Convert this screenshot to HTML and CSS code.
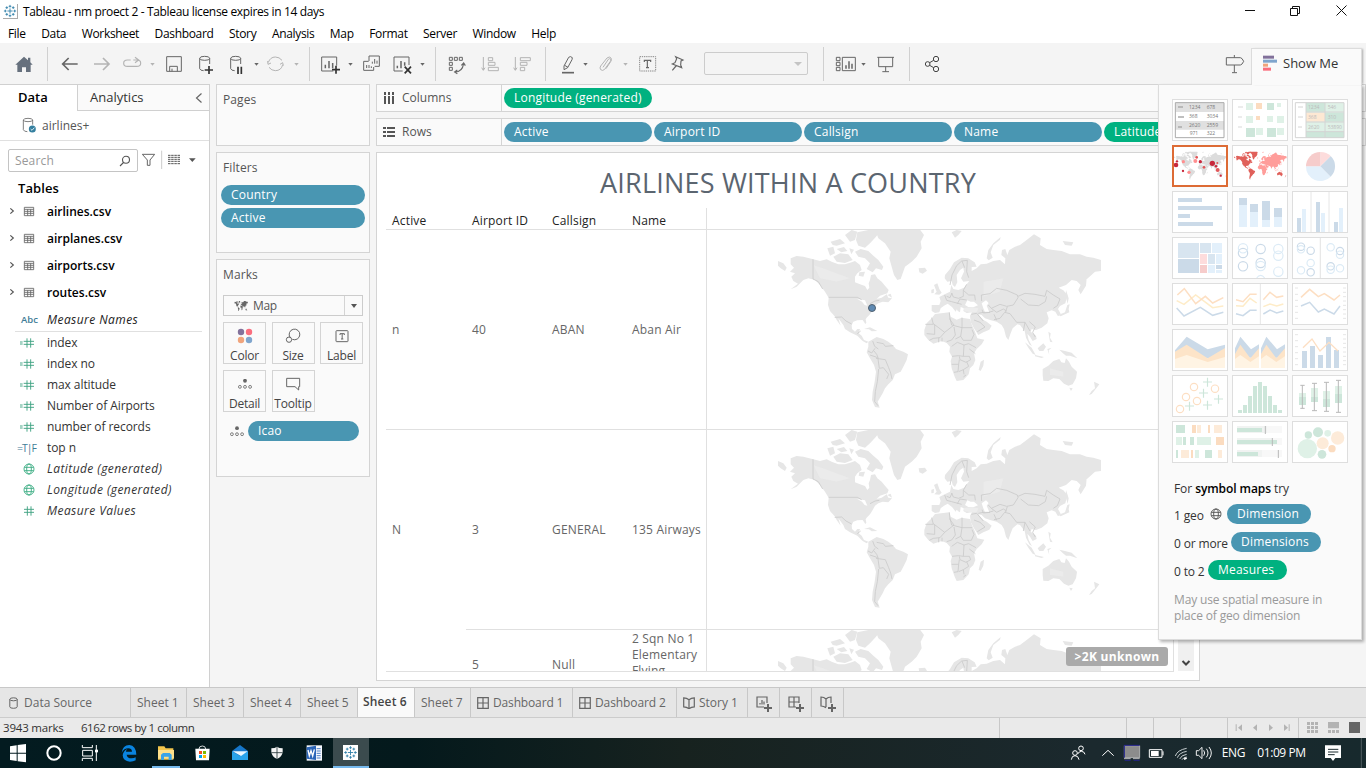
FILE: index.html
```html
<!DOCTYPE html>
<html lang="en">
<head>
<meta charset="utf-8">
<title>Tableau - nm proect 2</title>
<link rel="stylesheet" href="styles.css">
</head>
<body>
<svg class="defs" width="0" height="0">
<defs>
<g id="americas">
<path d="M62 100L80 93L100 95L130 103L150 108L170 103L185 110L205 118L225 118L245 112L255 108L270 120L275 135L262 145L255 155L255 172L270 178L285 183L292 195L298 188L296 175L300 165L303 150L315 148L322 160L335 170L345 182L356 195L352 205L330 212L320 222L335 218L350 208L355 218L366 220L355 232L338 230L325 235L315 242L308 255L300 268L290 278L287 283L289 293L286 297L278 285L262 286L250 290L245 300L246 312L255 320L262 312L270 312L266 325L275 332L282 345L295 350L290 355L278 348L262 332L240 322L225 312L220 300L205 280L212 302L200 285L194 274L180 258L174 240L176 218L165 200L150 180L135 165L115 160L100 165L80 185L62 193L84 176L70 168L64 155L75 145L60 140L72 128L62 118Z"/>
<path d="M24 108L40 115L50 128L45 138L32 130L24 122ZM172 70L190 65L195 85L180 92ZM190 95L210 85L235 88L248 105L225 114L200 110ZM182 50L210 42L225 55L200 62L188 60ZM225 30L245 15L262 20L255 45L240 50ZM262 22L300 14L335 14L318 35L300 55L285 68L265 62L258 45ZM200 72L222 66L232 78L214 82ZM238 70L252 74L244 88ZM272 72L295 78L310 92L325 105L340 125L336 135L318 130L308 142L290 132L300 115L285 100L265 95L255 80ZM268 142L285 140L280 155L266 152ZM352 210L362 206L366 218ZM282 312L300 307L322 318L305 319L297 313Z"/>
<path d="M315 14L450 14L462 30L452 50L455 70L440 95L425 110L405 125L392 162L382 165L372 150L365 125L358 100L362 80L345 55L325 40Z"/>
<path d="M295 350L310 342L320 336L340 342L355 350L370 362L378 372L400 380L414 388L410 405L400 425L392 440L375 448L368 465L355 478L345 490L338 505L330 518L323 530L329 548L315 546L306 525L308 500L314 470L318 440L312 420L300 400L290 382L295 365Z"/>
</g>
<g id="eurasia">
<path d="M485 240L508 240L512 228L508 216L524 208L540 200L544 180L550 192L565 195L582 188L590 178L598 168L580 170L573 160L582 140L580 128L570 135L560 150L562 172L555 186L548 180L545 168L532 170L524 160L525 150L540 132L552 112L575 98L595 100L614 112L620 125L605 126L605 138L620 130L632 118L650 116L670 108L690 105L705 118L706 100L694 90L696 75L706 72L712 90L718 75L735 65L750 60L770 45L792 28L812 40L810 60L830 72L850 75L875 78L900 88L930 88L950 95L970 98L993 105L993 138L975 140L962 152L950 163L930 168L950 160L948 182L932 208L925 195L932 180L920 168L905 165L888 180L866 188L880 196L892 210L886 235L870 243L864 252L872 266L864 274L856 260L845 256L830 262L836 280L832 295L815 308L798 315L785 312L782 320L798 332L800 342L788 348L780 335L772 326L776 345L786 364L778 358L768 338L764 318L750 300L742 298L728 310L722 325L715 345L708 335L702 312L695 300L680 290L660 285L645 280L635 270L625 268L640 285L650 290L665 302L658 314L640 322L625 330L612 310L602 290L600 272L606 262L590 264L580 258L582 250L572 246L570 262L563 258L558 246L543 232L562 250L557 260L546 246L533 236L522 242L512 250L508 262L495 264L485 258Z"/>
<path d="M495 267L520 264L538 262L542 275L560 284L575 278L600 282L605 298L615 320L622 340L643 344L635 358L620 372L612 385L616 405L610 420L600 430L596 448L580 465L560 468L554 455L545 430L542 408L546 395L538 380L540 365L530 354L515 348L490 356L475 345L463 330L463 315L470 295L485 280Z"/>
<path d="M632 410L642 404L640 422L632 438L626 434ZM493 208L500 200L492 180L502 175L508 192L515 203L508 209ZM484 194L492 192L491 204L484 205ZM446 130L465 128L471 137L458 146L448 142ZM650 100L655 75L670 55L692 36L690 44L670 60L662 82L668 98L656 106ZM545 22L560 15L575 18L565 30L555 38ZM878 48L910 52L905 62L885 60ZM892 240L899 238L896 252L898 262L885 268L872 274L865 270L885 262ZM888 195L896 220L893 236L887 215ZM765 352L785 368L797 390L788 386L775 368ZM795 390L822 396L815 399L795 394ZM803 370L820 355L828 365L820 378L808 378ZM832 372L845 368L836 376L838 390ZM868 374L885 378L905 383L922 400L900 392L888 392L878 384ZM835 320L842 325L840 338L848 352L840 350Z"/>
</g>
<g id="oceania"><path d="M818 432L835 422L850 408L868 402L874 412L884 414L888 400L897 410L905 425L921 440L918 460L908 478L895 482L882 476L868 462L850 460L835 468L820 467L818 450ZM898 488L908 490L903 498ZM972 470L988 478L980 488L965 507L957 510L965 498L975 490Z"/></g>
<g id="borders">
<path d="M129 103V162L145 170L158 192M176 217H262L275 224M300 236L315 228L328 226M194 277L215 276L228 288L245 297M262 326L272 318"/>
<path d="M308 348L314 364L325 372M320 352L340 356L346 364L370 362M294 378L305 384L315 370M300 390L318 396L325 400L320 388L312 378M318 400L346 404L356 428L362 444L366 462M324 402L328 430L340 428L356 448L350 462M326 432L322 470L316 500L314 530L324 542"/>
<path d="M540 180L546 150L560 122L575 108L592 106L590 140L596 158M576 108L584 128M590 178L580 196L596 210L614 210L616 226M524 210L530 226L545 230L575 238M545 204L550 216L566 220L580 214L580 196M562 236L570 222L590 225M546 204L540 218L530 214"/>
<path d="M635 228L634 210L660 206L680 190L710 196L742 210L744 218L730 240L710 244L690 238L664 250L655 240M744 214L765 205L795 208L825 214L830 196L850 210L870 222L862 242L850 250M752 222L775 240L806 242L826 230L830 214M664 250L680 262L700 252L710 258M625 265L640 262L656 262L670 258M672 284L690 280L704 262L720 266L740 292L765 292L780 318M712 245L706 262M680 286L672 268M765 292L760 318M778 290L796 306L788 322L796 336M604 268L620 265L640 288M612 285L630 292L645 306L622 320M636 254L640 264L660 262"/>
<path d="M485 278L490 298L466 298M490 296L524 322L552 300L540 284L538 262M494 300V328L470 326M524 322L510 338L490 340L478 346M540 280L545 300L576 308V278M576 308H606M552 306L556 330L545 345L530 350M576 308L572 334L556 342M572 334L580 346L604 346L612 328L606 314M545 364L562 352L582 360L596 356L618 368M582 360L580 394L566 392L546 394M598 372L616 386M580 394L598 394L602 404L588 412L570 404L568 394M568 404L566 418L545 418M566 418L564 440L552 442M566 440L580 434L596 424L590 410M580 434L582 448M506 338V352M516 338V350M580 456L588 450"/>
</g>
<g id="world"><use href="#americas"/><use href="#eurasia"/><use href="#oceania"/></g>
<symbol id="basemap" viewBox="0 0 1020 570">
<use href="#world" fill="#e6e6e6"/>
<path fill="#fff" d="M585 240L592 226L602 230L612 230L624 241L610 247L595 246ZM635 235L648 226L656 234L650 242L658 262L646 264L640 250ZM262 222L285 226L292 242L284 240L276 230ZM546 260L560 264L580 266L600 268V276L575 272L560 280L545 272Z"/>
<path fill="#ededed" d="M580 249L605 247L625 250L620 262L600 261L584 259Z"/>
<path fill="#f0f0f0" opacity=".5" d="M640 170L700 160L690 200L640 215ZM130 120L160 130L240 160L200 170L150 160ZM840 430L880 440L880 455L840 450Z"/>
<use href="#borders" fill="none" stroke="#c9c9c9" stroke-width="2.4"/>
</symbol>
<symbol id="tablerow" viewBox="0 345 141 81"><path d="M31 376l9 8-9 8" fill="none" stroke="#555" stroke-width="3.5"/><path d="M73 373h28v25h-28zM73 379h28M73 385h28M73 391h28M83 379v19M92 379v19" fill="none" stroke="#666" stroke-width="2.6"/></symbol>
<symbol id="calc" viewBox="0 96 141 63"><path d="M60 126h8M60 132h8M71 124h31M71 133h31M81 115v28M92 115v28" fill="none" stroke="#3fa382" stroke-width="2.8"/></symbol>
<symbol id="hash" viewBox="0 96 141 63"><path d="M72 124h30M72 133h30M82 115v28M93 115v28" fill="none" stroke="#3fa382" stroke-width="2.8"/></symbol>
<symbol id="globe" viewBox="0 0 36 36"><g fill="none" stroke="currentColor" stroke-width="2.8"><circle cx="18" cy="18" r="15"/><ellipse cx="18" cy="18" rx="7" ry="15"/><path d="M4 13h28M4 23h28"/></g></symbol>
<symbol id="detail" viewBox="0 0 44 33"><circle cx="22" cy="6" r="6" fill="#666"/><g fill="none" stroke="#666" stroke-width="2.6"><circle cx="6" cy="25" r="4.5"/><circle cx="22" cy="25" r="4.5"/><circle cx="38" cy="25" r="4.5"/></g></symbol>
<symbol id="mark" viewBox="0 0 48 48"><g stroke="#2f7fa8" stroke-width="3" fill="none"><path d="M24 15v18M15 24h18M24 3v9M19.500 8h9M24 36v9M19.500 40h9M3 24h9M8 19.500v9M36 24h9M40 19.500v9M13 8v9M8.500 12.500h9M35 8v9M30.500 12.500h9M13 31v9M8.500 35.500h9M35 31v9M30.500 35.500h9"/></g></symbol>
</defs>
</svg>

<div class="app">
<header class="titlebar">
<span class="applogo"><svg width="14" height="14"><use href="#mark"/></svg></span>
<span class="apptitle">Tableau - nm proect 2 - Tableau license expires in 14 days</span>
<svg class="winctl" width="136" height="24" viewBox="0 0 136 24" fill="none" stroke="#111"><path d="M15 10.500h10M60.500 8.500h7v7h-7zM62.500 8v-1.500h7v7h-1.500M106.500 5.500l10 10M116.500 5.500l-10 10"/></svg>
</header>
<nav class="menubar"><span>File</span><span>Data</span><span>Worksheet</span><span>Dashboard</span><span>Story</span><span>Analysis</span><span>Map</span><span>Format</span><span>Server</span><span>Window</span><span>Help</span></nav>

<div class="toolbar">
<svg width="47" viewBox="0 156 141 72"><path fill="#66707d" d="M46 194l26-24 12 11v-8h7v14l7 7h-6v22h-14v-14h-12v14h-14v-22z"/></svg>
<i class="sep"></i>
<svg width="38" viewBox="144 156 114 72" class="ln b"><path d="M233 192h-44M206 174l-18 18 18 18"/></svg>
<svg width="30" viewBox="258 156 90 72" class="ln b off"><path d="M282 192h44M309 174l18 18-18 18"/></svg>
<svg width="44" viewBox="348 156 132 72" class="ln off"><path d="M392 180h-10q-11 0-11 9.500t11 9.500h28q12 0 12-9.500 0-9.500-10-9.500h-12M405 172l11 8-11 8" stroke-width="3.500"/><path class="car" d="M451 189h13l-6.500 8z"/></svg>
<svg width="30" viewBox="480 156 90 72" class="ln"><path d="M500 170h44v44h-44zM509 214v-15h23v15M516 214v-8"/></svg>
<svg width="32" viewBox="570 156 96 72" class="ln"><ellipse cx="614" cy="175" rx="15" ry="6"/><path d="M599 175v31q2 6 12 6M629 175v17"/><path d="M614 210h25M627 198v24" stroke="#333" stroke-width="5"/></svg>
<svg width="41" viewBox="666 156 123 72" class="ln"><ellipse cx="707" cy="175" rx="15" ry="6"/><path d="M692 175v31q2 6 12 6M722 175v17"/><path d="M714 200v22M724 200v22" stroke="#333" stroke-width="5"/><path class="car" d="M763 189h13l-6.500 8z"/></svg>
<svg width="46" viewBox="789 156 138 72" class="ln off"><path d="M805 187q6-16 21-16 12 0 20 10M848 194q-4 18-22 18-11 0-19-10M803 183l1 10 9-4M850 197l-2-9-8 5"/><path class="car" d="M883 189h13l-6.500 8z"/></svg>
<i class="sep"></i>
<svg width="48" viewBox="930 156 144 72" class="ln"><path d="M1000 213h-35v-42h45v26"/><path d="M976 205v-11M987 205v-22M998 205v-16" stroke-width="4.500"/><path d="M996 209h24M1008 197v24" stroke="#333" stroke-width="5"/><path class="car" d="M1045 189h13l-6.500 8z"/></svg>
<svg width="28" viewBox="1074 156 84 72" class="ln"><path d="M1107 168h31v31h-14M1107 168v15M1091 184h15M1091 184v27h30v-10M1117 191v-6M1124 191v-14M1131 191v-9M1100 204v-9M1107 204v-9M1114 204v-5"/></svg>
<svg width="49" viewBox="1158 156 147 72" class="ln"><path d="M1208 213h-26v-42h45v24"/><path d="M1192 205v-8M1203 205v-22M1214 197v-10" stroke-width="4.500"/><path d="M1214 200l19 20M1233 200l-19 20" stroke="#333" stroke-width="5"/><path class="car" d="M1261 189h13l-6.500 8z"/></svg>
<i class="sep"></i>
<svg width="37" viewBox="-12 36 111 72" class="ln"><path d="M28 52h9v9h-9zM43 52h9v9h-9zM58 52h9v9h-9zM28 67h9v9h-9zM28 82h9v9h-9z"/><path d="M45 96q22 0 26-26M64 76l7-7 5 8M52 90l-8 6 8 5" stroke-width="3.500"/></svg>
<svg width="33" viewBox="99 36 99 72" class="ln off"><path d="M130 51v39M125 83l5 8 5-8M145 53h13v9h-13zM145 67h20v9h-20zM145 82h30v10h-30z"/></svg>
<svg width="39" viewBox="198 36 117 72" class="ln off"><path d="M226 51v39M221 83l5 8 5-8M241 53h30v9h-30zM241 67h20v9h-20zM241 82h13v10h-13z"/></svg>
<i class="sep"></i>
<svg width="47" viewBox="318 36 141 72" class="ln"><path d="M372 78l14-26q5-5 11 1l-1 6-13 24-11 6zM374 76l10 6"/><path d="M366 98h36" stroke-width="5"/><path class="car" d="M430 69h13l-6.500 8z"/></svg>
<svg width="40" viewBox="459 36 120 72" class="ln off"><path d="M489 82l16-24q4-4 7 0 1 3-1 6l-17 24q-6 6-12 1-4-5 0-11l19-24q8-6 12 0 3 5-1 11l-14 21"/><path class="car" d="M550 69h13l-6.500 8z"/></svg>
<svg width="30" viewBox="579 36 90 72" class="ln"><path d="M599 50h48v43h-48z" stroke-dasharray="4 2.500" stroke="#888"/><path d="M613 66v-5h19v5M622 61v22M618 83h9" stroke-width="3.500"/></svg>
<svg width="41" viewBox="669 36 123 72" class="ln"><path d="M707 50l22 10-6 3-1 12 3 8-28-11 8-4 5-12zM708 78l-11 13" stroke-width="3.500"/></svg>
<div class="fit"></div>
<i class="sep"></i>
<svg width="48" viewBox="1152 36 144 72" class="ln"><path d="M1189 52h11v10h-11zM1189 67h11v10h-11zM1189 82h11v10h-11zM1207 52h39v40h-39z"/><path d="M1218 86v-10M1227 86v-22M1236 86v-15" stroke-width="4.500"/><path class="car" d="M1264 69h13l-6.500 8z"/></svg>
<svg width="37" viewBox="1296 36 111 72" class="ln"><path d="M1312 52h50M1316 52v28h42v-28M1337 80v15M1327 95h20"/></svg>
<i class="sep"></i>
<svg width="40" viewBox="1410 36 120 72" class="ln"><g stroke="#444"><circle cx="1463" cy="72" r="7"/><circle cx="1488" cy="57" r="8"/><circle cx="1488" cy="87" r="8"/><path d="M1469 68l12-7M1469 76l12 7"/></g></svg>
<svg class="guide ln" width="35" viewBox="180 36 105 72"><path d="M211 53h42q5 0 10 11-5 11-10 11h-42zM235 45v8M235 75v22M228 98h15"/></svg>
</div>

<main class="work">
<aside class="data">
<div class="dtabs"><b>Data</b><span>Analytics<svg width="8" height="10" viewBox="0 0 8 10"><path d="M6.500 .5L1.500 5l5 4.500" fill="none" stroke="#666" stroke-width="1.200"/></svg></span></div>
<div class="source"><svg width="42" height="29" viewBox="0 81 126 87"><g fill="none" stroke="#666" stroke-width="2.500"><ellipse cx="84" cy="108" rx="14" ry="5"/><path d="M70 108v29q2 6 12 6M98 108v14"/></g><circle cx="97" cy="135" r="10.500" fill="#347f9f"/><path d="M92 135l4 4 7-8" stroke="#fff" stroke-width="2.500" fill="none"/></svg><span>airlines+</span></div>
<div class="searchrow"><div class="search">Search<svg width="12" height="12" viewBox="0 0 12 12" fill="none" stroke="#555" stroke-width="1.100"><circle cx="7" cy="4.800" r="3.500"/><path d="M4.500 7.500L1 11"/></svg></div><svg width="71" height="23" viewBox="414 195 213 69"><path d="M427 211h37l-14 17v16h-8v-16z" fill="none" stroke="#666" stroke-width="3"/><path d="M485 200v55" stroke="#ccc" stroke-width="3"/><path d="M504 214h36M504 220h36M504 226h36M504 232h36M504 239h36" stroke="#555" stroke-width="3" stroke-dasharray="7.500 2"/><path d="M567 223h20l-10 11z" fill="#555"/></svg></div>
<h3>Tables</h3>
<ul class="tables"><li><svg><use href="#tablerow"/></svg>airlines.csv</li><li><svg><use href="#tablerow"/></svg>airplanes.csv</li><li><svg><use href="#tablerow"/></svg>airports.csv</li><li><svg><use href="#tablerow"/></svg>routes.csv</li></ul>
<div class="mnames"><span class="abc">Abc</span><em>Measure Names</em></div>
<ul class="fields">
<li><svg><use href="#calc"/></svg>index</li><li><svg><use href="#calc"/></svg>index no</li><li><svg><use href="#calc"/></svg>max altitude</li><li><svg><use href="#calc"/></svg>Number of Airports</li><li><svg><use href="#calc"/></svg>number of records</li>
<li><span class="tf">=T|F</span>top n</li>
<li><svg class="gl"><use href="#globe"/></svg><em>Latitude (generated)</em></li><li><svg class="gl"><use href="#globe"/></svg><em>Longitude (generated)</em></li><li><svg><use href="#hash"/></svg><em>Measure Values</em></li>
</ul>
</aside>

<section class="cards">
<div class="card pages"><h4>Pages</h4></div>
<div class="card filters"><h4>Filters</h4><div class="pill">Country</div><div class="pill">Active</div></div>
<div class="card marks"><h4>Marks</h4>
<div class="marktype"><svg width="14" height="10" viewBox="20 60 980 440" preserveAspectRatio="none" fill="#666"><use href="#world"/></svg><span>Map</span><i></i></div>
<div class="btns">
<div><svg width="16" height="16" viewBox="0 0 16 16"><circle cx="4" cy="4" r="3.200" fill="#82719b"/><circle cx="12" cy="4" r="3.200" fill="#fa6e7e"/><circle cx="4" cy="12" r="3.200" fill="#f0a47c"/><circle cx="12" cy="12" r="3.200" fill="#7fa5cd"/></svg>Color</div>
<div><svg width="16" height="16" viewBox="0 0 48 48" fill="none" stroke="#666" stroke-width="3"><path d="M15 28A16 16 0 1 1 22 34"/><circle cx="12" cy="35" r="8"/></svg>Size</div>
<div><svg width="16" height="16" viewBox="0 0 48 48" fill="none" stroke="#666" stroke-width="3"><rect x="6" y="8" width="36" height="33" rx="2"/><path d="M18 21v-4h13v4M24.500 17v16M21 33h7"/></svg>Label</div>
<div><svg width="14" height="16" viewBox="0 -8 44 48"><use href="#detail" width="44" height="33"/></svg>Detail</div>
<div><svg width="16" height="16" viewBox="0 0 48 48" fill="none" stroke="#666" stroke-width="3"><path d="M5 7h39v25h-3v10l-11-10h-25z"/></svg>Tooltip</div>
</div>
<div class="icao"><svg width="14" height="11"><use href="#detail"/></svg><div class="pill">Icao</div></div>
</div>
</section>

<section class="view">
<div class="shelf"><div class="name"><svg width="12" height="12" viewBox="0 0 12 12" stroke="#555" stroke-width="2"><path d="M2 0v3M6 0v3M10 0v3M2 4v8M6 4v8M10 4v8"/></svg>Columns</div><div class="pill green">Longitude (generated)</div></div>
<div class="shelf"><div class="name"><svg width="12" height="12" viewBox="0 0 12 12" stroke="#555" stroke-width="1.800"><path d="M0 2h3M0 6h3M0 10h3M4 2h8M4 6h8M4 10h8"/></svg>Rows</div><div class="pill">Active</div><div class="pill">Airport ID</div><div class="pill">Callsign</div><div class="pill">Name</div><div class="pill green">Latitude</div></div>
<div class="sheet">
<h1>AIRLINES WITHIN A COUNTRY</h1>
<div class="viz">
<div class="grid">
<div class="row head"><span>Active</span><span>Airport ID</span><span>Callsign</span><span>Name</span><div class="pane"></div></div>
<div class="row"><span>n</span><span>40</span><span>ABAN</span><span>Aban Air</span><div class="pane"><svg class="map" width="340" height="190"><use href="#basemap"/></svg><i class="dot"></i></div></div>
<div class="row"><span>N</span><span>3</span><span>GENERAL</span><span>135 Airways</span><div class="pane"><svg class="map" width="340" height="190"><use href="#basemap"/></svg></div></div>
<div class="row last"><span></span><span>5</span><span>Null</span><span class="multi">2 Sqn No 1<br>Elementary<br>Flying</span><div class="pane"><svg class="map" width="340" height="190"><use href="#basemap"/></svg><b class="unknown">&gt;2K unknown</b></div></div>
</div>
<div class="scroll"><svg width="10" height="7" viewBox="0 0 10 7"><path d="M1.500 1L5 4.500 8.500 1" fill="none" stroke="#444" stroke-width="2"/></svg></div>
</div>
</div>
</section>
</main>

<div class="tabs">
<div class="ds"><svg width="9" height="12" viewBox="0 0 9 12" fill="none" stroke="#666"><ellipse cx="4.500" cy="2.300" rx="3.700" ry="1.500"/><path d="M.8 2.300v7.500q0 1.500 3.700 1.500t3.700-1.500V2.300"/></svg>Data Source</div>
<div class="s1">Sheet 1</div><div>Sheet 3</div><div>Sheet 4</div><div>Sheet 5</div><div class="on">Sheet 6</div><div class="s7">Sheet 7</div>
<div class="d1"><svg width="12" height="12" viewBox="0 0 12 12" class="tl"><path d="M.7.7h10.600v10.600H.7zM.7 6h10.600M6 .7v10.600"/></svg>Dashboard 1</div>
<div class="d2"><svg width="12" height="12" viewBox="0 0 12 12" class="tl"><path d="M.7.7h10.600v10.600H.7zM.7 6h10.600M6 .7v10.600"/></svg>Dashboard 2</div>
<div class="st"><svg width="12" height="12" viewBox="0 0 12 12" class="tl"><path d="M.7.8q3 0 5.300 2Q8.300.8 11.300.8v9q-3 0-5.300 2-2.300-2-5.300-2zM6 2.800v8.800"/></svg>Story 1</div>
<div class="add"><svg width="17" height="16" viewBox="0 0 17 16" class="tl"><path d="M8 11H1V1h10v6M4 8.500V7M6 8.500V4M8 8.500V5.500"/><path d="M8 12h8M12 8v8" stroke-width="2"/></svg></div>
<div class="add"><svg width="17" height="16" viewBox="0 0 17 16" class="tl"><path d="M8 11H1V1h10v6M1 6h10M6 1v10"/><path d="M8 12h8M12 8v8" stroke-width="2"/></svg></div>
<div class="add"><svg width="17" height="16" viewBox="0 0 17 16" class="tl"><path d="M6 11.800q-2-1.800-5-1.800V1q3 0 5 2 2-2 5-2v6M6 3v8"/><path d="M8 12h8M12 8v8" stroke-width="2"/></svg></div>
</div>
<div class="status"><span class="mk">3943 marks</span><span class="rw">6162 rows by 1 column</span>
<svg width="368" height="20" viewBox="114 102 1104 60"><path d="M118.500 102v60M499.500 102v60M580.500 102v60M661.500 102v60M802.500 102v60M1015.500 102v60" stroke="#c8c8c8" stroke-width="3"/><g fill="#b3b3b3"><path d="M827 121h3v20h-3zM846 121v20l-12-10zM891 121v20l-12-10zM927 121v20l12-10zM972 121v20l12-10zM986 121h3v20h-3zM1104 114h33v19h-33zM1104 138h9v9h-9zM1116 138h9v9h-9zM1128 138h9v9h-9zM1041 114h9v9h-9zM1053 114h9v9h-9zM1065 114h9v9h-9zM1041 126h9v9h-9zM1053 126h9v9h-9zM1065 126h9v9h-9zM1041 138h9v9h-9zM1053 138h9v9h-9zM1065 138h9v9h-9z"/><path fill="#666" d="M1167 114h33v33h-33z"/></g></svg></div>

<footer class="taskbar">
<svg width="36" viewBox="0 162 108 90"><path fill="#fff" d="M30 187l20-3v22h-20zM53 183l25-3v26h-25zM30 209h20v22l-20-3zM53 209h25v26l-25-3z"/></svg>
<svg width="36" viewBox="108 162 108 90"><circle cx="162" cy="207" r="20" fill="none" stroke="#fff" stroke-width="6"/></svg>
<svg width="36" viewBox="216 162 108 90"><path fill="none" stroke="#fff" stroke-width="3" d="M247 183v8h30v-8M248 199h29v17h-29zM247 231v-8h30v8M289 183v48"/><path fill="#fff" d="M285 197h9v8h-9z"/></svg>
<svg width="39" viewBox="324 162 117 90"><path fill="#0a84e0" d="M365 206q3-22 23-23 20 2 21 29h-29q1 11 15 11 7 0 12-3v9q-7 4-17 4-21-1-22-19 2-14 14-19-4 4-4 8h18q-1-10-11-10-13 0-20 13z"/></svg>
<svg width="37" class="run" viewBox="441 162 111 90"><path fill="#f3c64d" d="M474 187h19l4 6h23v34h-46z"/><path fill="#fde08b" d="M474 198h48v26h-48z"/><path fill="#3aa4e8" d="M483 228v-16l6-5h20l6 5v16h-9v-10h-14v10z"/></svg>
<svg width="36" viewBox="552 162 108 90"><path fill="none" stroke="#fff" stroke-width="2.500" d="M597 195q0-9 10-9t10 9"/><path fill="#fff" d="M586 194h43l-2 35h-39z"/><path fill="#f25022" d="M597 201h9v9h-9z"/><path fill="#7fba00" d="M609 201h9v9h-9z"/><path fill="#00a4ef" d="M597 213h9v9h-9z"/><path fill="#ffb900" d="M609 213h9v9h-9z"/></svg>
<svg width="38" viewBox="660 162 114 90"><path fill="#1676c8" d="M696 201l24-18 24 18v27h-48z"/><path fill="#29a3ea" d="M696 202l24 14 24-14v26h-48z"/><path fill="#eaf7ff" d="M698 202h45l-20 14z"/></svg>
<svg width="37" viewBox="774 162 111 90"><path fill="#f5f5f5" d="M814 193q11 0 17-5 6 5 17 5v12q-2 14-17 20-15-6-17-20z"/><path stroke="#253639" stroke-width="2.500" d="M831 188v37M814 206h34"/></svg>
<svg width="38" viewBox="885 162 114 90"><path fill="#f7faff" d="M920 184h46v46h-46z"/><path fill="#2a65b8" d="M920 190l28-5v43l-28-4z"/><path stroke="#2a65b8" stroke-width="2.500" d="M950 194h12M950 201h12M950 208h12M950 215h12M950 222h12"/><path fill="none" stroke="#fff" stroke-width="4" d="M924 198l4 18 5-16 5 16 5-20"/></svg>
<svg width="36" class="run cur" viewBox="999 162 108 90"><path fill="#fff" d="M1029 183h45v45h-45z"/><use href="#mark" x="1030" y="184" width="43" height="43"/></svg>
<div class="tray">
<svg width="34" viewBox="300 162 102 90" fill="none" stroke="#fff" stroke-width="3"><circle cx="363" cy="193" r="7"/><circle cx="345" cy="207" r="7"/><path d="M334 227q1-12 11-12 10 0 12 12M353 210q4-8 11-8 9 0 11 9"/></svg>
<svg width="24" viewBox="402 162 72 90" fill="none" stroke="#fff" stroke-width="3"><path d="M427 215l17-16 17 16"/></svg>
<svg width="26" viewBox="474 162 78 90"><path fill="#8c8c8c" stroke="#d5d5d5" stroke-width="2" d="M493 185h46v36h-46z"/><path fill="none" stroke="#1c1c8c" stroke-width="3" d="M493 221v-37h46"/><path stroke="#bbb" stroke-width="3" d="M492 224h20M519 224h20"/><path stroke="#22228a" stroke-width="3" d="M494 229h18M521 229h18"/></svg>
<svg width="24" viewBox="552 162 72 90"><path fill="none" stroke="#fff" stroke-width="3" d="M568 197h38v23h-38zM609 202v12"/><path fill="#fff" d="M573 201h23v15h-23z"/></svg>
<svg width="24" viewBox="624 162 72 90" fill="none" stroke="#c9d0d2" stroke-width="3"><path d="M646 216q6-18 34-23M652 221q6-15 28-19M659 225q5-12 21-14M666 227q4-7 14-8"/><path d="M672 226l8-4" stroke="#fff" stroke-width="5"/></svg>
<svg width="24" viewBox="696 162 72 90" fill="none" stroke="#fff" stroke-width="2.800"><path d="M709 200h7l10-10v34l-10-10h-7zM731 199q6 8 0 16M739 194q10 13 0 26M747 189q14 18 0 36"/></svg>
<span class="lang">ENG</span><span class="clock">01:09 PM</span>
<svg width="54" viewBox="1056 162 162 90"><path fill="#fff" d="M1095 184h48v38h-17l-7 9-7-9h-17z"/><path stroke="#1b2a2e" stroke-width="3" d="M1104 196h31M1104 204h31M1104 212h20"/><path stroke="#6a7679" stroke-width="2" d="M1204 162v90"/></svg>
</div>
</footer>

<aside class="showme">
<div class="smtab"><svg width="14" height="16" viewBox="0 0 42 48"><path fill="#82719b" d="M0 2h33v9H0z"/><path fill="#7fa5cd" d="M0 14h42v9H0z"/><path fill="#f0a47c" d="M0 26h15v9H0z"/><path fill="#fa6e7e" d="M0 38h24v9H0z"/></svg>Show Me</div>
<div class="thumbs">
<svg viewBox="0 0 168 126"><path fill="#e0e0e0" d="M10 11h146v28H10zM10 66h146v26H10z"/><path fill="none" stroke="#aaa" stroke-width="3" d="M10 11h146v105H10z"/><path stroke="#aaa" stroke-width="5" d="M18 24h15M18 54h18M18 84h12"/><g class="tn"><text x="51" y="31">1234</text><text x="104" y="31">678</text><text x="51" y="58">368</text><text x="104" y="58">3034</text><text x="51" y="85">2620</text><text x="104" y="85">2559</text><text x="53" y="108">971</text><text x="104" y="108">322</text></g></svg>
<svg viewBox="0 0 168 126"><path fill="#ececec" d="M18 21h15v6H18zM18 51h12v6H18zM18 81h12v6H18z"/><path fill="#dff1e7" d="M42 12h21v21H42zM42 51h21v21H42zM135 12h12v12h-12zM105 51h18v18h-18zM135 51h21v21h-21zM72 87h21v21H72zM135 87h21v21h-21z"/><path fill="#cde6da" d="M105 12h21v21h-21zM42 87h27v27H42zM105 87h27v27h-27z"/><path fill="#fbdcc0" d="M72 12h18v18H72zM72 51h12v12H72z"/></svg>
<svg viewBox="0 0 168 126"><path fill="#dff1e7" d="M42 11h114v105H42z"/><path fill="#cde6da" d="M42 11h57v27H42zM99 41h57v27H99zM42 99h114v17H42z"/><path fill="#fde8d3" d="M42 41h57v27H42z"/><path fill="none" stroke="#d4d4d4" stroke-width="3" d="M10 11h146v105H10zM42 11v105M99 11v105M42 39h114M42 69h114M42 98h114M18 24h15M18 54h15M18 84h12"/><g class="tn soft"><text x="48" y="31">1234</text><text x="107" y="31">546</text><text x="48" y="61">368</text><text x="107" y="61">310</text><text x="48" y="91">2620</text><text x="107" y="91">53890</text></g></svg>
<svg class="sel" viewBox="0 0 168 126"><g transform="translate(2 18) scale(.163 .155)" fill="#dcdcdc"><use href="#world"/></g><g fill="#c8283c"><circle cx="12" cy="60" r="7"/><circle cx="121" cy="55" r="8"/><circle cx="85" cy="50" r="5"/><circle cx="33" cy="78" r="3.500"/><circle cx="146" cy="92" r="3.500"/><circle cx="15" cy="49" r="3.500"/><circle cx="132" cy="64" r="4"/></g><g fill="#ff8f90"><circle cx="34" cy="50" r="5"/><circle cx="70" cy="48" r="6"/><circle cx="51" cy="82" r="5"/></g><g fill="#e15759"><circle cx="137" cy="75" r="6"/><circle cx="74" cy="37" r="4"/><circle cx="96" cy="67" r="4"/><circle cx="136" cy="54" r="3"/></g></svg>
<svg viewBox="0 0 168 126"><g transform="translate(2 18) scale(.163 .155)"><g fill="#e0605a"><use href="#americas"/><use href="#oceania"/></g><g fill="#ff9d9a"><use href="#eurasia"/></g></g></svg>
<svg viewBox="0 0 168 126"><path fill="#e3f0fb" d="M85 64H42a43 43 0 0 0 74 31z"/><path fill="#cbdae8" d="M85 64l31 31a43 43 0 0 0 0-62z"/><path fill="#fddcdc" d="M85 64l31-31a43 43 0 0 0-31-12z"/><path fill="#f6cccb" d="M85 64V21a43 43 0 0 0-43 43z"/></svg>
<svg viewBox="0 0 168 126"><path fill="#cbdae8" d="M18 21h72v12H18zM18 45h132v12H18zM18 69h36v12H18zM18 93h105v12H18z"/></svg>
<svg viewBox="0 0 168 126"><path fill="#e3f0fb" d="M21 42h24v66H21zM54 63h24v45H54zM90 87h24v21H90zM126 78h24v30h-24z"/><path fill="#cbdae8" d="M21 21h24v21H21zM54 39h24v24H54zM90 30h24v57H90zM126 51h24v27h-24z"/></svg>
<svg viewBox="0 0 168 126"><path stroke="#e6e6e6" stroke-width="3" d="M57 3v120M111 3v120"/><path fill="#cbdae8" d="M15 81h12v42H15zM72 33h12v90H72zM126 93h12v30h-12z"/><path fill="#e3f0fb" d="M30 54h12v69H30zM87 66h12v57H87zM141 51h12v72h-12z"/></svg>
<svg viewBox="0 0 168 126"><path fill="#d8e5f0" d="M18 18h63v45H18zM84 18h33v30H84zM108 51h21v30h-21z"/><path fill="#e3f0fb" d="M120 18h30v30h-30zM132 51h18v30h-18zM108 84h21v24h-21zM132 99h18v9h-18z"/><path fill="#cbdae8" d="M18 66h63v42H18zM132 84h18v12h-18z"/><path fill="#fddcdc" d="M84 51h21v30H84z"/><path fill="#f6cccb" d="M84 84h21v24H84z"/></svg>
<svg viewBox="0 0 168 126" fill="none" stroke-width="3.500"><g stroke="#cbdae8"><circle cx="33" cy="48" r="14"/><circle cx="33" cy="88" r="14"/><circle cx="86" cy="36" r="14"/><circle cx="86" cy="78" r="14"/></g><g stroke="#dcebf6"><circle cx="33" cy="34" r="14"/><circle cx="139" cy="36" r="14"/><circle cx="139" cy="56" r="14"/><circle cx="86" cy="87" r="14"/><circle cx="139" cy="104" r="14"/><path d="M74 123q12-16 24 0"/></g></svg>
<svg viewBox="0 0 168 126" fill="none" stroke-width="3.500"><path stroke="#e6e6e6" d="M85 3v120"/><g stroke="#cbdae8"><circle cx="27" cy="29" r="11"/><circle cx="56" cy="41" r="11"/><circle cx="144" cy="42" r="11"/><circle cx="56" cy="106" r="11"/><circle cx="116" cy="88" r="11"/></g><g stroke="#dcebf6"><circle cx="27" cy="37" r="11"/><circle cx="116" cy="31" r="11"/><circle cx="144" cy="53" r="11"/><circle cx="56" cy="78" r="11"/><circle cx="27" cy="100" r="11"/><circle cx="144" cy="94" r="11"/><circle cx="116" cy="98" r="11"/></g></svg>
<svg viewBox="0 0 168 126" fill="none" stroke-width="4.500"><path stroke="#feecc8" d="M14 53l22 11 35-28 51 38 32-5"/><path stroke="#fddfc3" d="M16 36l21-19 34 45 29-22 22 20 32-16"/><path stroke="#cbdae8" d="M14 75l22 24 49-26 37 24 32-9"/></svg>
<svg viewBox="0 0 168 126" fill="none" stroke-width="4.500"><path stroke="#e6e6e6" stroke-width="3" d="M85 3v120"/><path stroke="#fddfc3" d="M12 50l21 6 21-22h20M94 50l20-22 20 15 20-4"/><path stroke="#feecc8" d="M12 68l21 2 21-24 20 14M94 71l20-8 20 6 20-6"/><path stroke="#cbdae8" d="M12 92l21 6 21-16h20M94 93l20-12 20 9 20-6"/></svg>
<svg viewBox="0 0 168 126" fill="none" stroke-width="4.500"><path stroke="#e6e6e6" stroke-width="3" d="M9 15h9M9 34h9M9 52h9M9 70h9M9 88h9M9 106h9M153 15h9M153 28h9M153 41h9M153 54h9M153 67h9M153 80h9M153 93h9M153 106h9"/><path stroke="#fddfc3" d="M27 43l26-24 26 22 18-9 29 19 18-15"/><path stroke="#cbdae8" d="M27 69l26-11 26 29 18-9 29 15 18-24"/></svg>
<svg viewBox="0 0 168 126"><path fill="#cbdae8" d="M9 64l35-41 63 38 52-14v40H9z"/><path fill="#fde4c8" d="M9 68l35-21 63 41 52-31v60H9z"/><path fill="#fff4e4" d="M9 90l35-12 63 21 52-15v33H9z"/></svg>
<svg viewBox="0 0 168 126"><g id="areas"><path fill="#cbdae8" d="M9 58l16-35 32 38 24-15v40H9z"/><path fill="#fde4c8" d="M9 75l16-28 30 41 26-30v59H9z"/><path fill="#fff4e4" d="M9 90l16-12 30 21 26-17v35H9z"/></g><use href="#areas" x="78"/></svg>
<svg viewBox="0 0 168 126"><path stroke="#e6e6e6" stroke-width="3" d="M9 17h9M9 35h9M9 53h9M9 71h9M9 89h9M9 107h9M153 17h9M153 30h9M153 43h9M153 56h9M153 69h9M153 82h9M153 95h9M153 107h9"/><path fill="#cbdae8" d="M30 66h15v51H30zM54 51h15v66H54zM78 78h15v39H78zM102 24h15v93h-15zM126 63h15v54h-15z"/><path fill="none" stroke="#fddfc3" stroke-width="4" d="M33 56l27-26 24 36 27-26 27 26"/></svg>
<svg viewBox="0 0 168 126" fill="none" stroke-width="3.500"><g stroke="#fddfc3"><circle cx="66" cy="36" r="11"/><circle cx="129" cy="41" r="11"/><circle cx="42" cy="66" r="11"/><circle cx="75" cy="78" r="11"/><circle cx="24" cy="102" r="11"/></g><path stroke="#cde6da" d="M93 21h27M106.500 8v27M81 54h27M94.500 41v27M126 72h27M139.500 59v27M39 93h27M52.500 80v27M93 90h27M106.500 77v27"/></svg>
<svg viewBox="0 0 168 126"><path fill="#cde6da" d="M18 105h12v9H18zM33 90h12v24H33zM48 63h12v51H48zM63 33h12v81H63zM78 21h12v93H78zM93 33h12v81H93zM108 63h12v51h-12zM123 90h12v24h-12zM138 105h12v9h-12z"/></svg>
<svg viewBox="0 0 168 126"><path fill="#dff1e7" d="M21 54h21v12H21zM57 39h21v27H57zM93 48h21v24H93zM129 33h21v24h-21z"/><path fill="#cde6da" d="M21 66h21v24H21zM57 66h21v15H57zM93 72h21v24H93zM129 57h21v27h-21z"/><path stroke="#b8b8b8" stroke-width="3" d="M31 31v69M25 31h13M25 100h13M67 25v82M60 25h15M60 107h15M103 22v87M96 22h15M96 109h15M139 16v96M132 16h15M132 112h15"/></svg>
<svg viewBox="0 0 168 126"><path fill="#cde6da" d="M12 12h27v24H12zM33 48h9v24h-9zM54 48h12v24H54zM12 87h6v24h-6zM99 87h21v24H99z"/><path fill="#dff1e7" d="M12 48h18v24H12zM75 48h42v24H75zM69 87h12v24H69z"/><path fill="#fbdcc0" d="M60 12h12v24H60zM108 12h6v24h-6zM132 48h24v24h-24zM57 87h6v24h-6z"/><path fill="#fdebd9" d="M75 12h12v24H75zM126 12h24v24h-24zM27 87h24v24H27zM138 87h12v24h-12z"/></svg>
<svg viewBox="0 0 168 126"><path fill="#f8f8f8" d="M15 15h135v21H15zM15 51h135v21H15zM15 87h135v21H15z"/><path fill="#f1f3f2" d="M15 15h90v21H15zM15 51h105v21H15zM15 87h75v21H15z"/><path fill="#cde6da" d="M15 21h75v12H15zM15 57h120v12H15zM15 93h63v12H15z"/><path stroke="#b8b8b8" stroke-width="3" d="M100 15v24M121 51v24M139 87v24"/></svg>
<svg viewBox="0 0 168 126"><g fill="#cde6da"><circle cx="49" cy="42" r="11"/><circle cx="78" cy="34" r="15"/><circle cx="90" cy="100" r="13"/></g><g fill="#dff1e7"><circle cx="46" cy="83" r="29"/><circle cx="107" cy="37" r="10"/></g><g fill="#fdebd9"><circle cx="92" cy="67" r="18"/><circle cx="137" cy="51" r="20"/></g><circle cx="120" cy="83" r="11" fill="#fbdcc0"/></svg>
</div>
<p class="for">For <b>symbol maps</b> try</p>
<div class="need g1"><span>1 geo</span><svg width="12" height="12"><use href="#globe"/></svg><div class="pill">Dimension</div></div>
<div class="need g2"><span>0 or more</span><div class="pill">Dimensions</div></div>
<div class="need g3"><span>0 to 2</span><div class="pill green">Measures</div></div>
<p class="note">May use spatial measure in<br>place of geo dimension</p>
</aside>
</div>
</body>
</html>
```
FILE: styles.css
```css
*{box-sizing:border-box}
body,h1,h3,h4,p,ul{margin:0;padding:0}
body{width:1366px;height:768px;overflow:hidden;font:12px "Open Sans","Noto Sans",sans-serif;color:#333;background:#f5f5f5}
ul{list-style:none}
svg{display:block;flex:none}
.defs{position:absolute}
.app{position:relative;display:flex;flex-direction:column;width:1366px;height:768px}
.titlebar{display:flex;align-items:center;height:24px;background:#fff;padding-left:3px;color:#000}
.applogo{display:flex;align-items:center;justify-content:center;width:15px;height:15px;margin-top:-2px;border-right:1px solid #aaa;border-bottom:1px solid #aaa}
.apptitle{margin:-1px 0 0 5px;letter-spacing:-.35px}
.winctl{margin-left:auto}
.menubar{display:flex;height:19px;background:#fff;padding-left:8px;gap:15.5px;color:#000;line-height:19px;letter-spacing:-.33px}
.toolbar{display:flex;align-items:center;height:41px;background:#f4f4f4}
.toolbar>svg{height:24px}
.sep{width:1px;height:34px;background:#d0d0d0}
.ln{fill:none;stroke:#666;stroke-width:3}
.ln.b{stroke-width:5}
.ln.off{stroke:#b4b4b4}
.ln .car{fill:#666;stroke:none}
.ln.off .car{fill:#b4b4b4}
.fit{position:relative;width:104px;height:23px;margin-right:15px;border:1px solid #ccc;border-radius:2px}
.fit::after{content:"";position:absolute;right:5px;top:9px;border:4px solid transparent;border-top-color:#c4c4c4;border-bottom:0}
.guide{margin-left:auto;margin-right:115px}
.work{display:flex;height:603px}
.data{width:210px;background:#fff;border-right:1px solid #d0d0d0;border-top:1px solid #d0d0d0}
.dtabs{display:flex;height:26px;font-size:13px;line-height:25px}
.dtabs b{width:77px;padding-left:18px;color:#000;font-weight:600}
.dtabs span{flex:1;display:flex;align-items:center;justify-content:space-between;padding:0 6px 0 12px;background:#fafafa;border-left:1px solid #d0d0d0;border-bottom:1px solid #d0d0d0}
.source{display:flex;align-items:center;height:30px;border-bottom:1px solid #e0e0e0;color:#555}
.source span{margin-top:-1px}
.searchrow{display:flex;padding:8px 0 0 8px;height:33px}
.search{display:flex;align-items:center;justify-content:space-between;width:130px;height:23px;padding:0 6px;border:1px solid #c4c4c4;border-radius:2px;color:#999;letter-spacing:.15px}
h3{height:25px;padding-left:18px;font-size:13px;font-weight:600;line-height:28px;color:#000;letter-spacing:.1px}
.tables li,.fields li{display:flex;align-items:center}
.tables li{height:27px;padding-bottom:2px;color:#000;font-weight:600;font-size:12px}
.tables svg{width:47px;height:27px}
.mnames{display:flex;align-items:center;height:25px;padding-top:1px;margin:0 7px 0 15px;border-bottom:1px solid #e0e0e0;color:#222}
em{letter-spacing:.43px}
.abc{width:32px;padding-left:6px;color:#3f7d97;font-size:9.5px;font-weight:600}
.fields li{height:21px;letter-spacing:-.08px}
.fields svg{width:47px;height:21px}
.fields svg.gl{width:12px;height:12px;margin:0 12px 0 23px;color:#3fae85}
.fields .tf{width:47px;padding-left:17px;color:#3f7d97;font-size:10.5px;letter-spacing:-1px}
.cards{width:160px;padding-left:6px;display:flex;flex-direction:column;gap:6px}
.card{border:1px solid #d4d4d4;background:#fafafa}
.pages{height:62px}
.filters{height:101px}
.marks{height:218px}
h4{height:32px;padding-left:6px;font-weight:400;line-height:30px;color:#555;letter-spacing:.1px}
.pill{height:20px;border-radius:10px;background:#4996b2;color:#fff;line-height:19px;padding-left:10px;white-space:nowrap;font-size:12px;letter-spacing:.2px;font-weight:500}
.green{background:#00b180}
.filters .pill{margin:0 4px 3px}
.marktype{display:flex;align-items:center;width:140px;height:21px;margin:3px 0 6px 6px;padding-left:10px;border:1px solid #ccc;background:#fafafa;color:#555}
.marktype span{flex:1;padding-left:5px;letter-spacing:-.3px}
.marktype i{width:18px;height:100%;border-left:1px solid #d4d4d4;display:flex;align-items:center;justify-content:center}
.marktype i::after{content:"";border:3.5px solid transparent;border-top:4px solid #555;border-bottom:0}
.btns{display:grid;grid-template-columns:repeat(3,43px);gap:6px 5.5px;margin-left:6px}
.btns div{display:flex;flex-direction:column;align-items:center;height:42px;padding-top:5px;border:1px solid #d4d4d4;color:#444;line-height:23px;letter-spacing:-.2px}
.icao{display:flex;align-items:center;gap:4px;margin:9px 0 0 13px}
.icao .pill{width:111px}
.view{width:996px;padding-left:6px;display:flex;flex-direction:column;flex:none}
.shelf{display:flex;align-items:center;height:28px;margin-bottom:6px;border:1px solid #d4d4d4;background:#fafafa;overflow:hidden}
.shelf .name{display:flex;align-items:center;gap:7px;width:125px;height:100%;padding:0 0 1px 6px;margin-right:2px;border-right:1px solid #d4d4d4;color:#555}
.shelf .pill{flex:none;width:148px;margin-right:2px}
.sheet{width:824px;height:529px;border:1px solid #d4d4d4;background:#fff;padding-left:9px}
h1{height:55px;padding-right:9px;text-align:center;font-size:27px;font-weight:400;line-height:59px;letter-spacing:.2px;color:#5b6570}
.viz{display:flex;gap:4px}
.grid{width:788px;height:464px;overflow:hidden;border-right:1px solid #e0e0e0;border-bottom:1px solid #e0e0e0}
.row{position:relative;display:grid;grid-template-columns:80px 80px 80px 80px 1fr;height:200px;line-height:200px;border-bottom:1px solid #e0e0e0;color:#666;letter-spacing:.18px}
.row>span{padding-left:6px;white-space:nowrap}
.head{height:22px;line-height:25px;color:#222}
.pane{position:relative;border-left:1px solid #e0e0e0;overflow:hidden}
.map{margin:-5px 0 0 63px}
.dot{position:absolute;left:160.500px;top:74px;width:8px;height:8px;border-radius:50%;background:#5f8ab3;border:1px solid #50606f}
.last{height:42px;line-height:69px;border:0}
.last::before{content:"";position:absolute;left:0;top:-1px;width:80px;height:1px;background:#fff}
.last .multi{line-height:16px;padding-top:1px;height:42px;overflow:hidden}
.unknown{position:absolute;right:5px;top:17px;width:102px;height:19px;border-radius:3px;background:#aaa;color:#fff;text-align:center;line-height:19px;font-size:12px;letter-spacing:.3px}
.scroll{width:16px;height:463px;background:#f0f0f0;display:flex;align-items:flex-end;justify-content:center;padding-bottom:4px}
.tabs{display:flex;height:31px;border-top:1px solid #c8c8c8;border-bottom:1px solid #ccc;background:#e6e6e6;color:#666}
.tabs>div{display:flex;align-items:center;width:57px;padding-left:6px;border-right:1px solid #c8c8c8;white-space:nowrap}
.tabs .ds{width:131px;padding-left:9px;gap:6px}
.tabs .s1{width:56px}
.tabs .on{background:#fafafa;color:#444;font-weight:600;padding:0 0 2px 5px;letter-spacing:.15px}
.tabs .s7{width:56px}
.tabs .d1{width:102px;gap:4px;letter-spacing:-.15px}
.tabs .d2{width:104px;gap:4px;letter-spacing:-.1px}
.tabs .st{width:71px;gap:4px}
.tabs .add{width:32px;padding:2px 0 0 8px}
.tl{fill:none;stroke:#666;stroke-width:1.2}
.status{display:flex;align-items:center;height:20px;background:#eaeaea;font-size:11.5px;color:#333}
.status span{margin-top:-1px}
.status .mk{width:81px;padding-left:3px;letter-spacing:-.2px}
.status .rw{letter-spacing:-.5px}
.status>svg{margin-left:auto}
.taskbar{display:flex;height:30px;background:linear-gradient(90deg,#031b20,#04191c 30%,#17221f 50%,#1b292e 80%,#17292d)}
.taskbar svg{height:30px}
.run{background:linear-gradient(#76b9ed,#76b9ed) 50% 100%/28px 2px no-repeat}
.cur{background:linear-gradient(#76b9ed,#76b9ed) 50% 100%/36px 2px no-repeat,#3b4b4e}
.tray{display:flex;margin-left:auto;color:#fff;line-height:29px}
.lang{width:35px;text-align:center;letter-spacing:-.3px}
.clock{width:61px;text-align:center;letter-spacing:-.4px}
.showme{position:absolute;left:1158px;top:84px;width:204px;height:556px;padding:14px 0 0 13px;border:1px solid #dcdcdc;background:#fafafa;box-shadow:2px 2px 3px rgba(0,0,0,.3)}
.smtab{position:absolute;right:-1px;top:-37px;width:111px;height:37px;display:flex;align-items:center;gap:6px;padding:0 0 8px 11px;border:1px solid #dcdcdc;border-bottom:0;background:#fafafa;font-size:13px;color:#333;box-shadow:2px 0 2px -1px rgba(0,0,0,.3)}
.thumbs{display:grid;grid-template-columns:repeat(3,56px);gap:4px}
.thumbs svg{width:56px;height:42px;background:#fff;outline:1px solid #dedede;outline-offset:-1px}
.thumbs .sel{outline:2px solid #dd6b35;outline-offset:-2px}
.tn{font-size:15px;fill:#777}
.tn.soft{fill:#bbb}
.showme p{padding-left:2px}
.for{margin:17px 0 6px;line-height:18px;color:#333;letter-spacing:-.08px}
.for b{font-weight:600;color:#000}
.need{display:flex;height:28px;padding-left:2px;color:#333}
.need span{flex:none;white-space:nowrap;line-height:24px;letter-spacing:-.15px}
.need svg{margin:4px 0 0 7px;color:#555}
.g1 span{width:29px}
.g1 .pill{width:84px;margin-left:5px}
.g2 span{width:54px}
.g2 .pill{width:90px;margin-left:3px}
.g3 span{width:32px}
.g3 .pill{width:79px;margin-left:2px}
.note{margin-top:4px;line-height:16px;color:#999;letter-spacing:-.15px}
```
